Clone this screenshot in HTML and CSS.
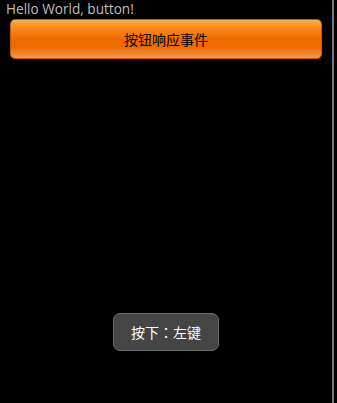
FILE: index.html
```html
<!DOCTYPE html>
<html lang="zh-CN">
  <head>
    <meta charset="UTF-8" />
    <meta name="viewport" content="width=device-width, initial-scale=1.0" />
    <title>button</title>
    <link rel="stylesheet" href="styles.css">
  </head>
  <body>
    <div class="screen">
      <div class="app">
        <p class="hello">Hello World, button!</p>
        <button class="btn">按钮响应事件</button>
        <div class="toast" lang="zh-TW">按下：左键</div>
      </div>
      <div class="edge"></div>
    </div>
  </body>
</html>
```

FILE: styles.css
```css
* {
  margin: 0;
  padding: 0;
  box-sizing: border-box;
}
html,
body {
  background-color: #000;
  height: 100%;
}
.screen {
  display: flex;
  height: 403px;
}
.app {
  width: 332px;
  display: flex;
  flex-direction: column;
  align-items: flex-start;
}
.edge {
  width: 2px;
  background-color: #777;
}
.hello {
  color: #bdbdbd;
  font-family: "Open Sans", "DejaVu Sans", sans-serif;
  font-size: 13.6px;
  line-height: 17px;
  padding-left: 6px;
}
.btn {
  margin: 2px 0 0 10px;
  width: 312px;
  height: 40px;
  border: 1px solid #c75a00;
  border-radius: 5px;
  background: linear-gradient(#ffad4a 0%, #fb8a1e 20%, #ef6c00 50%, #ec6a04 70%, #f39a4a 100%);
  color: #000;
  font-family: "Noto Sans CJK SC", sans-serif;
  font-size: 14px;
}
/* 提示框 */
.toast {
  margin: 254px 0 0 113px;
  width: 106px;
  height: 38px;
  line-height: 36px;
  text-align: center;
  background-color: #454545;
  border: 1px solid #6c6c6c;
  border-radius: 7px;
  color: #fff;
  font-family: "Noto Sans CJK TC", "Noto Sans CJK SC", sans-serif;
  font-size: 14px;
}
```
